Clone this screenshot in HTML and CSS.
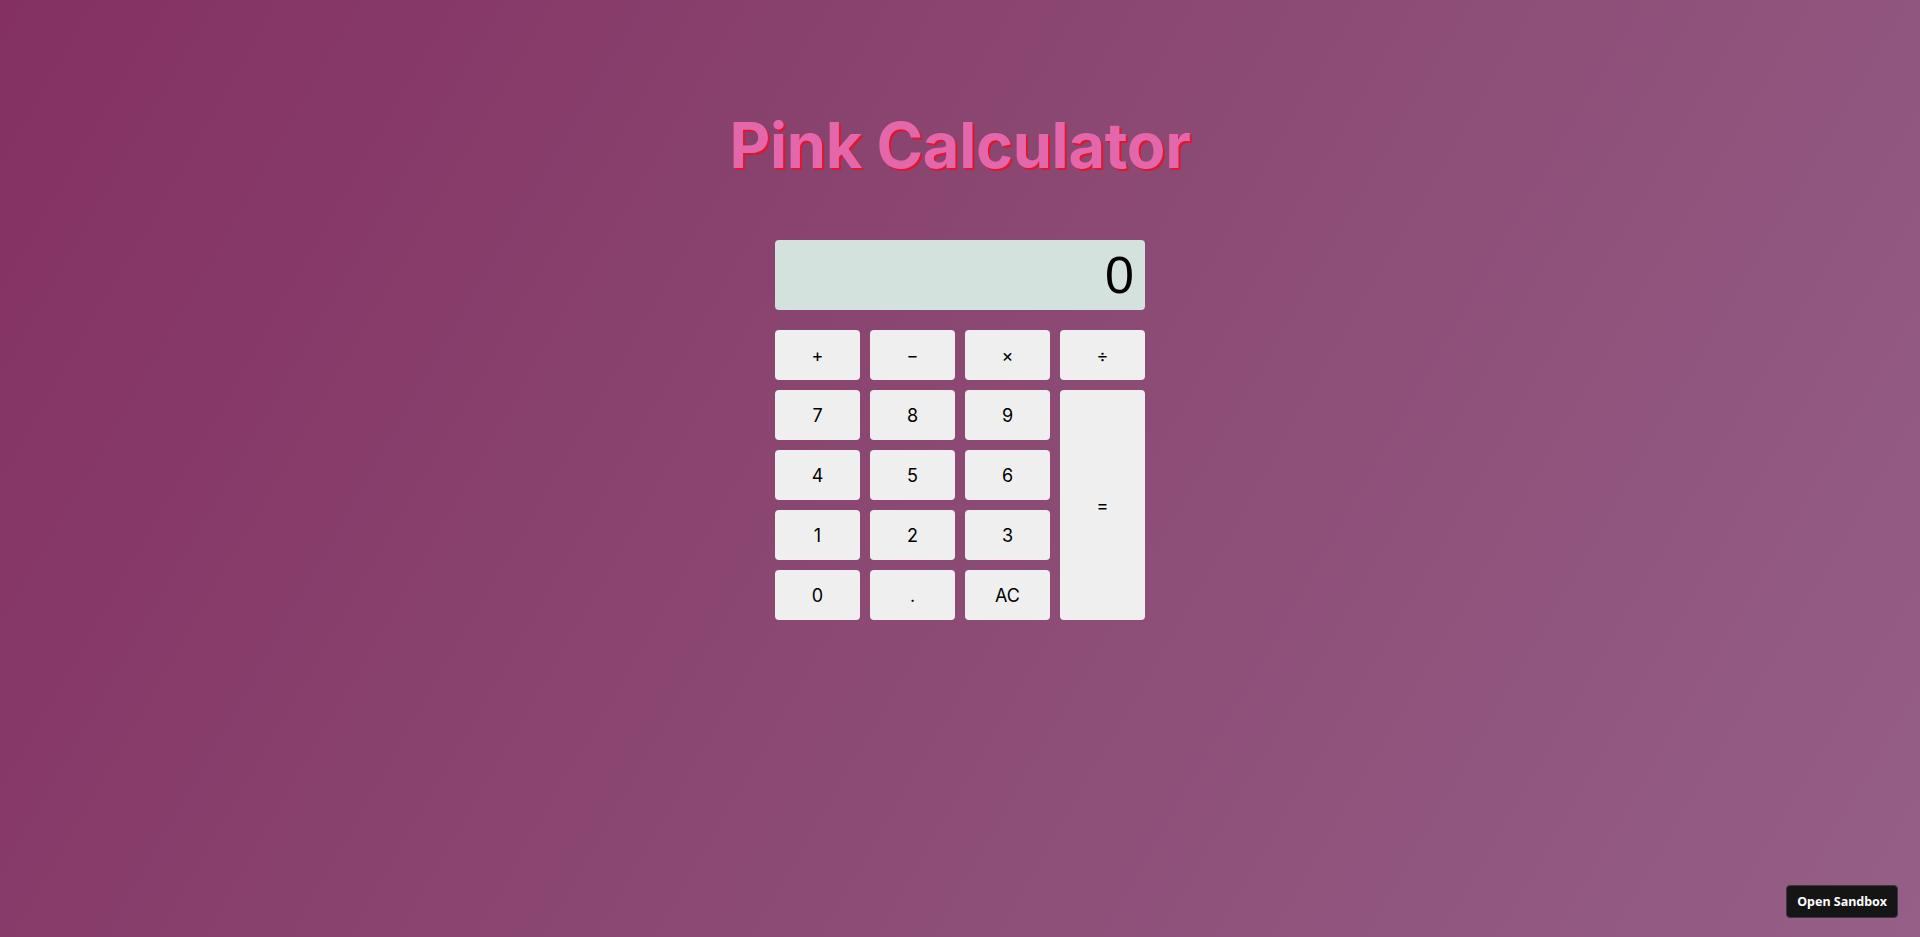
FILE: index.html
```html
<!DOCTYPE html>
<html>
<head>
<meta charset="utf-8">
<title>Pink Calculator</title>
<link rel="stylesheet" href="styles.css">
</head>
<body>
<main class="page">
  <h1 class="title">Pink Calculator</h1>
  <div class="calc">
    <div class="display">0</div>
    <div class="keys">
      <button class="key">+</button>
      <button class="key">−</button>
      <button class="key">×</button>
      <button class="key">÷</button>
      <button class="key">7</button>
      <button class="key">8</button>
      <button class="key">9</button>
      <button class="key key-eq">=</button>
      <button class="key">4</button>
      <button class="key">5</button>
      <button class="key">6</button>
      <button class="key">1</button>
      <button class="key">2</button>
      <button class="key">3</button>
      <button class="key">0</button>
      <button class="key">.</button>
      <button class="key">AC</button>
    </div>
  </div>
</main>
<a class="sandbox">Open Sandbox</a>
</body>
</html>
```
FILE: styles.css
```css
html, body {
  margin: 0;
  height: 100%;
}
body {
  background: linear-gradient(120deg, #843063 0%, #8a4771 45%, #955f88 100%);
  font-family: Inter, "Noto Sans", sans-serif;
  overflow: hidden;
}
.page {
  display: flex;
  flex-direction: column;
  align-items: center;
  padding-top: 107px;
}
.title {
  margin: 0 0 56px;
  font-size: 63px;
  line-height: 77px;
  font-weight: 700;
  color: #e467ab;
  text-shadow: 2px 2px 0 #e0162e;
  letter-spacing: -0.3px;
}
.calc {
  width: 370px;
  display: flex;
  flex-direction: column;
  gap: 20px;
}
.display {
  height: 70px;
  background: #d4e2dd;
  border-radius: 4px;
  box-sizing: border-box;
  padding: 0 11px 0 12px;
  display: flex;
  align-items: center;
  justify-content: flex-end;
  font-family: "Liberation Sans", Arial, sans-serif;
  font-size: 52px;
  color: #000;
}
.keys {
  display: grid;
  grid-template-columns: repeat(4, 85px);
  grid-auto-rows: 50px;
  gap: 10px;
}
.key {
  border: none;
  margin: 0;
  padding: 0;
  background: #efefef;
  border-radius: 4px;
  font-family: Inter, "Noto Sans", sans-serif;
  font-size: 18px;
  color: #000;
}
.key-eq {
  grid-column: 4;
  grid-row: 2 / span 4;
}
.sandbox {
  position: fixed;
  right: 22px;
  bottom: 19px;
  width: 112px;
  height: 33px;
  box-sizing: border-box;
  background: #151515;
  border: 1px solid #3a3a3a;
  border-radius: 4px;
  color: #fff;
  font-family: "Noto Sans", sans-serif;
  font-weight: 700;
  font-size: 12.5px;
  display: flex;
  align-items: center;
  justify-content: center;
}
```
